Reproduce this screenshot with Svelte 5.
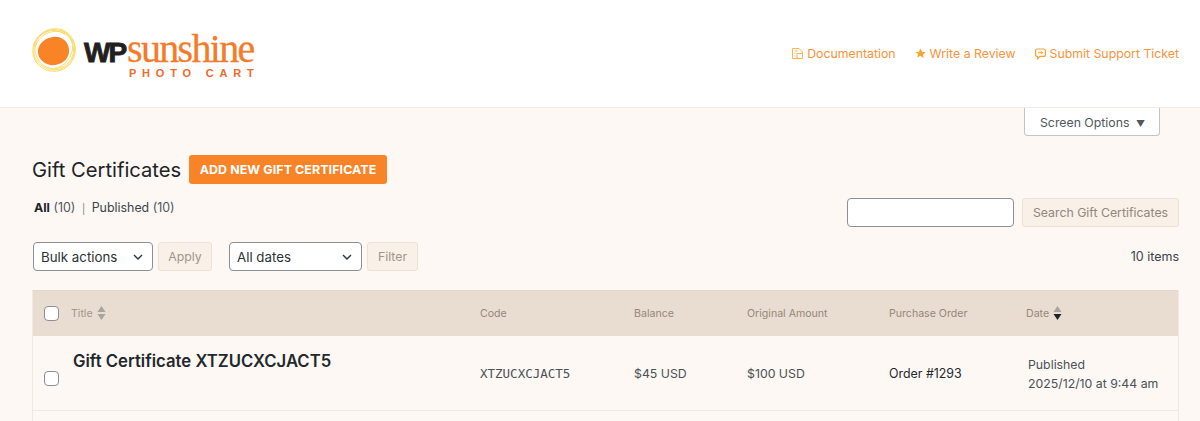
<script lang="ts">
  const links = [
    { label: 'Documentation', icon: 'doc' },
    { label: 'Write a Review', icon: 'star' },
    { label: 'Submit Support Ticket', icon: 'ticket' }
  ];
</script>

<div class="page">
  <header class="brand-bar">
    <div class="logo">
      <svg class="sun" width="44" height="44" viewBox="0 0 44 44" aria-hidden="true">
        <g fill="none" stroke="#fcd75f" stroke-width="0.900">
          <path d="M22 .7c11-1 20.500 8 21.300 19.300.8 12-8.300 23-20.300 23.300C11 43.800 1.500 35 .8 24 0 12 10 1.700 22 .7z" />
          <path d="M25 3.500c9 0 15.500 7 16.500 16.500 1 11-7 19.500-17.500 20.500C13 41.500 4.500 34 3 22.500 2.500 12 14 2.500 25 3.500z" />
          <path d="M18 2c11-2.500 22.500 5.500 24.500 16 1.500 10-4.500 21-15.500 23.500C15.500 43.500 4.500 37.500 2 26 .5 15 7 4.500 18 2z" />
          <path d="M28 1.500c8 2.500 13 10 12.500 18.500-.5 10-8 18-17.500 20.500" />
          <path d="M2.500 17C5 8.500 12 3 21 2.500c5 0 9 1.500 12 4" />
        </g>
        <path d="M21 9c8-1 15 4 16 12 1 8-5 15-14 16C15 38 7 33 6 25 5 17 12 10 21 9z" fill="#f98428" />
      </svg>
      <div class="wordmark">
        <div class="word-top"><span class="wp">WP</span><span class="sunshine">sunshine</span></div>
        <div class="photo-cart">PHOTO CART</div>
      </div>
    </div>
    <nav class="brand-links">
      {#each links as link}
        <a href="#top">
          {#if link.icon === 'doc'}
            <svg width="11" height="11" viewBox="0 0 11 11" fill="none" stroke="#fbb454" stroke-width="1" aria-hidden="true"><path d="M.5.5h6.500l3.500 3.500v6.500H.5z" /><path d="M5 10.500V5.500h5.500M2.500 3h3M2.500 5.500h1M2.500 8h1" /></svg>
          {:else if link.icon === 'star'}
            <svg width="11" height="11" viewBox="0 0 12 12" fill="#fba32f" aria-hidden="true"><path d="M6 .6l1.700 3.600 3.900.5-2.900 2.700.8 3.900L6 8.400l-3.500 1.900.8-3.900L.4 4.700l3.900-.5z" /></svg>
          {:else}
            <svg width="11" height="12" viewBox="0 0 11 12" fill="none" stroke="#fba32f" stroke-width="1.200" aria-hidden="true"><path d="M2 1h7a1.400 1.400 0 0 1 1.400 1.400v4.600A1.400 1.400 0 0 1 9 8.400H5L2.500 10.800V8.400H2A1.400 1.400 0 0 1 .6 7V2.400A1.400 1.400 0 0 1 2 1z" /><path d="M3 4.700h4.500M6 3.200l1.500 1.500L6 6.200" stroke-width="1" /></svg>
          {/if}
          {link.label}
        </a>
      {/each}
    </nav>
  </header>

  <main class="content">
    <div class="screen-meta">
      <button class="screen-options">Screen Options <span class="caret">▼</span></button>
    </div>

    <div class="title-row">
      <h1>Gift Certificates</h1>
      <a class="add-new" href="#top">ADD NEW GIFT CERTIFICATE</a>
    </div>

    <div class="filters-top">
      <ul class="subsubsub">
        <li><strong>All</strong> <span class="count">(10)</span></li>
        <li class="sep">|</li>
        <li>Published <span class="count">(10)</span></li>
      </ul>
      <div class="search">
        <input type="text" aria-label="Search" />
        <button class="ghost search-btn">Search Gift Certificates</button>
      </div>
    </div>

    <div class="tablenav">
      <div class="select">Bulk actions
        <svg width="12" height="12" viewBox="0 0 12 12" fill="none" stroke="#2c3338" stroke-width="1.400" aria-hidden="true"><path d="M2 4l4 4 4-4" /></svg>
      </div>
      <button class="ghost apply">Apply</button>
      <div class="select dates">All dates
        <svg width="12" height="12" viewBox="0 0 12 12" fill="none" stroke="#2c3338" stroke-width="1.400" aria-hidden="true"><path d="M2 4l4 4 4-4" /></svg>
      </div>
      <button class="ghost filter">Filter</button>
      <span class="items">10 items</span>
    </div>

    <div class="table">
      <div class="row head">
        <div class="cell check"><span class="box"></span></div>
        <div class="cell title">Title
          <svg width="9" height="15" viewBox="0 0 9 15" aria-hidden="true"><path d="M4.500 0l4 6H.5z" fill="#a8a49e" /><path d="M4.500 14l4-6H.5z" fill="#a8a49e" /></svg>
        </div>
        <div class="cell code">Code</div>
        <div class="cell balance">Balance</div>
        <div class="cell original">Original Amount</div>
        <div class="cell order">Purchase Order</div>
        <div class="cell date">Date
          <svg width="9" height="15" viewBox="0 0 9 15" aria-hidden="true"><path d="M4.500 0l4 6H.5z" fill="#a8a49e" /><path d="M4.500 14l4-6H.5z" fill="#1d2327" /></svg>
        </div>
      </div>
      <div class="row body">
        <div class="cell check"><span class="box"></span></div>
        <div class="cell title"><strong>Gift Certificate XTZUCXCJACT5</strong></div>
        <div class="cell code mono">XTZUCXCJACT5</div>
        <div class="cell balance">$45 USD</div>
        <div class="cell original">$100 USD</div>
        <div class="cell order">Order #1293</div>
        <div class="cell date">Published<br />2025/12/10 at 9:44 am</div>
      </div>
    </div>
  </main>
</div>

<style>
  :global(body) {
    margin: 0;
    background: #fdf8f3;
    overflow: hidden;
  }

  .page {
    font-family: Inter, 'Liberation Sans', sans-serif;
    color: #4b5157;
    font-size: 12.300px;
  }

  .brand-bar {
    height: 108px;
    box-sizing: border-box;
    background: #fff;
    border-bottom: 1px solid #f3ede7;
    display: flex;
    align-items: center;
    justify-content: space-between;
    padding: 0 21px 0 32px;
  }

  .logo {
    display: flex;
    align-items: center;
    gap: 8px;
  }

  .sun {
    display: block;
    margin-top: -8px;
  }

  .wordmark {
    padding-top: 5px;
  }

  .word-top {
    display: flex;
    align-items: baseline;
    height: 34px;
    line-height: 32px;
  }

  .wp {
    font-family: 'Liberation Sans', sans-serif;
    font-weight: 700;
    font-size: 28px;
    letter-spacing: -2px;
    color: #231f20;
    -webkit-text-stroke: 0.9px #231f20;
  }

  .sunshine {
    font-family: 'Liberation Serif', serif;
    font-size: 40px;
    letter-spacing: -1.700px;
    color: #f47b2a;
    -webkit-text-stroke: 0.3px #f47b2a;
    margin-left: 2px;
  }

  .photo-cart {
    font-family: 'Liberation Sans', sans-serif;
    font-size: 11px;
    font-weight: 700;
    letter-spacing: 5.800px;
    color: #ee6a2c;
    text-align: right;
    margin-right: -6px;
    line-height: 12px;
  }

  .brand-links {
    display: flex;
    gap: 19px;
  }

  .brand-links a {
    color: #f9933a;
    text-decoration: none;
    font-size: 12.300px;
    display: flex;
    align-items: center;
    gap: 4px;
  }

  .content {
    padding: 0 21px 0 32px;
  }

  .screen-meta {
    display: flex;
    justify-content: flex-end;
    padding-right: 19px;
  }

  .screen-options {
    width: 136px;
    height: 28px;
    box-sizing: border-box;
    background: #fff;
    border: 1px solid #c3c4c7;
    border-top: 0;
    border-radius: 0 0 4px 4px;
    font: inherit;
    color: #50575e;
    padding: 1px 0 0 1px;
  }

  .caret {
    font-size: 9px;
    margin-left: 3px;
  }

  .title-row {
    display: flex;
    align-items: center;
    gap: 8px;
    margin-top: 18px;
    height: 30px;
  }

  h1 {
    margin: 0;
    font-size: 20.200px;
    font-weight: 400;
    color: #1d2327;
  }

  .add-new {
    background: #f98428;
    color: #fff;
    font-weight: 700;
    font-size: 12.400px;
    text-decoration: none;
    border-radius: 3px;
    height: 29px;
    line-height: 29px;
    padding: 0 10.500px;
    letter-spacing: 0.100px;
  }

  .filters-top {
    display: flex;
    justify-content: space-between;
    margin-top: 9px;
  }

  .subsubsub {
    list-style: none;
    margin: 7px 0 0 2px;
    padding: 0;
    display: flex;
    gap: 6.500px;
    font-size: 12.400px;
    color: #3c434a;
    height: 18px;
  }

  .subsubsub strong {
    color: #1d2327;
  }

  .count {
    color: #50575e;
  }

  .sep {
    font-size: 10px;
    line-height: 18px;
    color: #7b8085;
  }

  .search {
    display: flex;
    gap: 8px;
    margin-top: 5px;
  }

  .search input {
    width: 167px;
    height: 29px;
    box-sizing: border-box;
    border: 1px solid #8c8f94;
    border-radius: 4px;
    background: #fff;
    padding: 0;
  }

  .ghost {
    height: 29px;
    box-sizing: border-box;
    background: #f9f0e8;
    border: 1px solid #ebe1d7;
    border-radius: 3px;
    color: #a2958a;
    font: inherit;
    padding: 0;
  }

  .search-btn {
    width: 157px;
    color: #94867a;
  }

  .tablenav {
    display: flex;
    align-items: center;
    margin-top: 15px;
    height: 29px;
  }

  .select {
    width: 120px;
    margin-left: 1px;
    height: 29px;
    box-sizing: border-box;
    border: 1px solid #8c8f94;
    border-radius: 4px;
    background: #fff;
    color: #2c3338;
    font-size: 13.300px;
    display: flex;
    align-items: center;
    justify-content: space-between;
    padding: 0 8px 0 7px;
  }

  .select.dates {
    width: 133px;
    margin-left: 17px;
  }

  .apply {
    width: 54px;
    margin-left: 5px;
  }

  .filter {
    width: 51px;
    margin-left: 5px;
  }

  .items {
    margin-left: auto;
    font-size: 12.500px;
    color: #3c434a;
  }

  .table {
    margin-top: 19px;
    padding-bottom: 30px;
    border: 1px solid #f0e9e2;
    border-top: 0;
    border-bottom: 0;
  }

  .row {
    display: grid;
    grid-template-columns: 38px 409px 154px 113px 142px 137px 1fr;
  }

  .head {
    height: 46px;
    background: #e9ddd2;
    border-top: 1px solid #e2d8cd;
    align-items: center;
    box-sizing: border-box;
    color: #948779;
    font-size: 10.600px;
  }

  .head .cell {
    display: flex;
    align-items: center;
    gap: 4px;
  }

  .head .title {
    color: #a2968a;
  }

  .body {
    height: 75px;
    box-sizing: border-box;
    border-bottom: 1px solid #f0e9e2;
    align-items: center;
  }

  .check {
    padding-left: 11px;
  }

  .box {
    display: block;
    width: 15px;
    height: 15px;
    box-sizing: border-box;
    border: 1px solid #8c8f94;
    border-radius: 4px;
    background: #fff;
  }

  .body .check {
    padding-top: 10px;
  }

  .body .title {
    align-self: start;
    padding: 15px 0 0 2px;
  }

  .body strong {
    font-size: 16.700px;
    font-weight: 600;
    color: #23282d;
  }

  .mono {
    font-family: 'DejaVu Sans Mono', 'Liberation Mono', monospace;
    font-size: 12.500px;
  }

  .body .order {
    color: #23282d;
    font-size: 12.400px;
  }

  .body .date {
    line-height: 19px;
    padding: 2px 0 0 2px;
  }
</style>
